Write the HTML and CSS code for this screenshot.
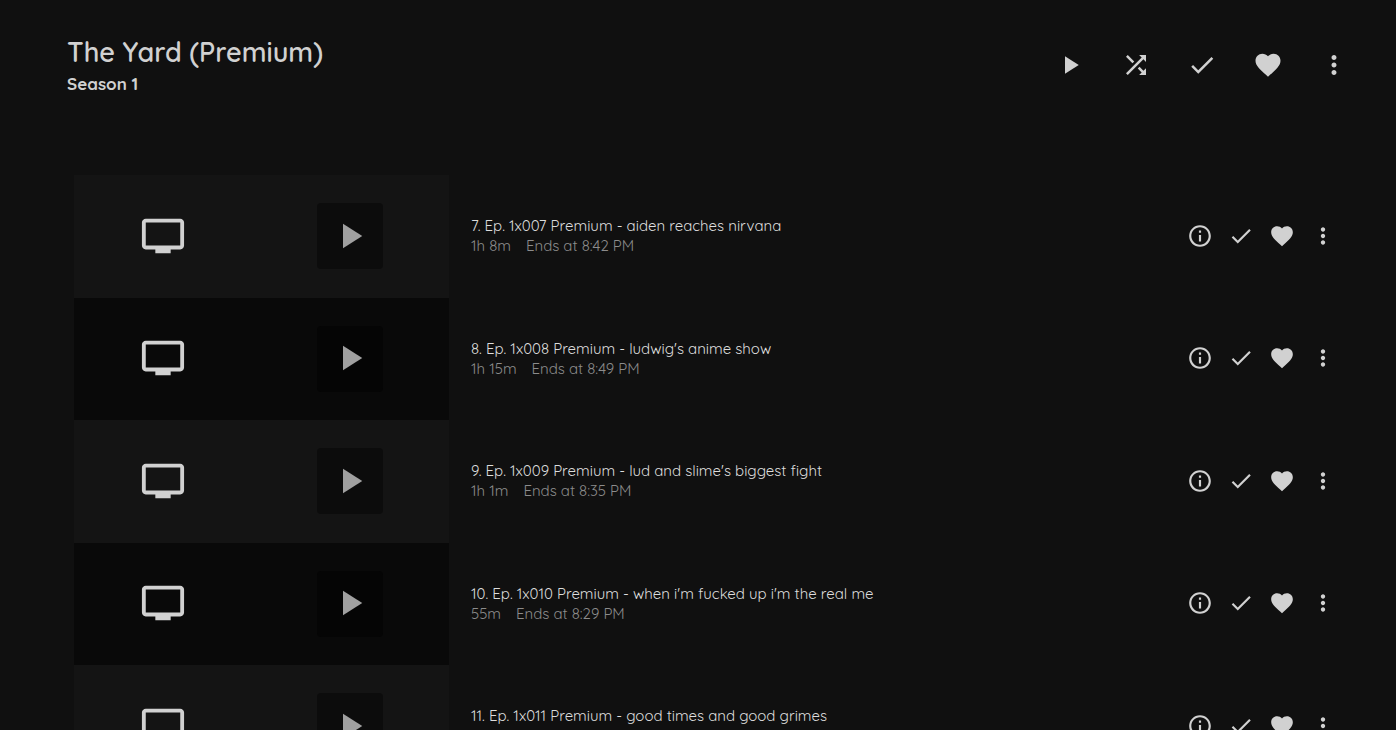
FILE: index.html
```html
<!DOCTYPE html>
<html lang="en">
<head>
<meta charset="utf-8">
<meta name="viewport" content="width=device-width, initial-scale=1">
<title>The Yard (Premium) - Season 1</title>
<link rel="stylesheet" href="styles.css">
</head>
<body>
<svg class="sprite" aria-hidden="true">
  <symbol id="play" viewBox="0 0 24 24"><path d="M8 5v14l11-7z"/></symbol>
  <symbol id="shuffle" viewBox="0 0 24 24"><path d="M10.59 9.17L5.41 4 4 5.41l5.17 5.17 1.42-1.41zM14.5 4l2.04 2.04L4 18.59 5.41 20 17.96 7.46 20 9.5V4h-5.5zm.33 9.41l-1.41 1.41 3.13 3.13L14.5 20H20v-5.5l-2.04 2.04-3.13-3.13z"/></symbol>
  <symbol id="check" viewBox="0 0 24 24"><path d="M9 16.17L4.83 12l-1.42 1.41L9 19 21 7l-1.41-1.41z"/></symbol>
  <symbol id="heart" viewBox="0 0 24 24"><path d="M12 21.35l-1.45-1.32C5.4 15.36 2 12.28 2 8.5 2 5.42 4.42 3 7.5 3c1.74 0 3.41.81 4.5 2.09C13.09 3.81 14.76 3 16.5 3 19.58 3 22 5.42 22 8.5c0 3.78-3.4 6.86-8.55 11.54L12 21.35z"/></symbol>
  <symbol id="more" viewBox="0 0 24 24"><path d="M12 8c1.1 0 2-.9 2-2s-.9-2-2-2-2 .9-2 2 .9 2 2 2zm0 2c-1.1 0-2 .9-2 2s.9 2 2 2 2-.9 2-2-.9-2-2-2zm0 6c-1.1 0-2 .9-2 2s.9 2 2 2 2-.9 2-2-.9-2-2-2z"/></symbol>
  <symbol id="info" viewBox="0 0 24 24"><path d="M11 17h2v-6h-2v6zm1-15C6.48 2 2 6.48 2 12s4.48 10 10 10 10-4.48 10-10S17.52 2 12 2zm0 18c-4.41 0-8-3.59-8-8s3.59-8 8-8 8 3.59 8 8-3.59 8-8 8zM11 9h2V7h-2v2z"/></symbol>
  <symbol id="tv" viewBox="0 0 24 24"><path d="M21 3H3c-1.1 0-2 .9-2 2v12c0 1.1.9 2 2 2h5v2h8v-2h5c1.1 0 1.99-.9 1.99-2L23 5c0-1.1-.9-2-2-2zm0 14H3V5h18v12z"/></symbol>
</svg>

<header class="header">
  <div class="titles">
    <h1 class="title">The Yard (Premium)</h1>
    <h2 class="season">Season 1</h2>
  </div>
  <div class="header-actions">
    <button class="icon-button" type="button" aria-label="Play"><svg class="icon"><use href="#play"/></svg></button>
    <button class="icon-button" type="button" aria-label="Shuffle"><svg class="icon"><use href="#shuffle"/></svg></button>
    <button class="icon-button" type="button" aria-label="Mark played"><svg class="icon"><use href="#check"/></svg></button>
    <button class="icon-button" type="button" aria-label="Favorite"><svg class="icon"><use href="#heart"/></svg></button>
    <button class="icon-button" type="button" aria-label="More"><svg class="icon"><use href="#more"/></svg></button>
  </div>
</header>

<main class="episodes">
  <article class="episode">
    <div class="thumb">
      <svg class="tv"><use href="#tv"/></svg>
      <button class="thumb-play" type="button" aria-label="Play episode 7"><svg class="play-icon"><use href="#play"/></svg></button>
    </div>
    <div class="info">
      <h3 class="name">7. Ep. 1x007 Premium - aiden reaches nirvana</h3>
      <p class="meta"><span>1h 8m</span><span>Ends at 8:42 PM</span></p>
    </div>
    <div class="actions">
      <button class="icon-button small" type="button" aria-label="Info"><svg class="icon"><use href="#info"/></svg></button>
      <button class="icon-button small" type="button" aria-label="Mark played"><svg class="icon"><use href="#check"/></svg></button>
      <button class="icon-button small" type="button" aria-label="Favorite"><svg class="icon"><use href="#heart"/></svg></button>
      <button class="icon-button small" type="button" aria-label="More"><svg class="icon"><use href="#more"/></svg></button>
    </div>
  </article>
  <article class="episode">
    <div class="thumb">
      <svg class="tv"><use href="#tv"/></svg>
      <button class="thumb-play" type="button" aria-label="Play episode 8"><svg class="play-icon"><use href="#play"/></svg></button>
    </div>
    <div class="info">
      <h3 class="name">8. Ep. 1x008 Premium - ludwig's anime show</h3>
      <p class="meta"><span>1h 15m</span><span>Ends at 8:49 PM</span></p>
    </div>
    <div class="actions">
      <button class="icon-button small" type="button" aria-label="Info"><svg class="icon"><use href="#info"/></svg></button>
      <button class="icon-button small" type="button" aria-label="Mark played"><svg class="icon"><use href="#check"/></svg></button>
      <button class="icon-button small" type="button" aria-label="Favorite"><svg class="icon"><use href="#heart"/></svg></button>
      <button class="icon-button small" type="button" aria-label="More"><svg class="icon"><use href="#more"/></svg></button>
    </div>
  </article>
  <article class="episode">
    <div class="thumb">
      <svg class="tv"><use href="#tv"/></svg>
      <button class="thumb-play" type="button" aria-label="Play episode 9"><svg class="play-icon"><use href="#play"/></svg></button>
    </div>
    <div class="info">
      <h3 class="name">9. Ep. 1x009 Premium - lud and slime's biggest fight</h3>
      <p class="meta"><span>1h 1m</span><span>Ends at 8:35 PM</span></p>
    </div>
    <div class="actions">
      <button class="icon-button small" type="button" aria-label="Info"><svg class="icon"><use href="#info"/></svg></button>
      <button class="icon-button small" type="button" aria-label="Mark played"><svg class="icon"><use href="#check"/></svg></button>
      <button class="icon-button small" type="button" aria-label="Favorite"><svg class="icon"><use href="#heart"/></svg></button>
      <button class="icon-button small" type="button" aria-label="More"><svg class="icon"><use href="#more"/></svg></button>
    </div>
  </article>
  <article class="episode">
    <div class="thumb">
      <svg class="tv"><use href="#tv"/></svg>
      <button class="thumb-play" type="button" aria-label="Play episode 10"><svg class="play-icon"><use href="#play"/></svg></button>
    </div>
    <div class="info">
      <h3 class="name">10. Ep. 1x010 Premium - when i'm fucked up i'm the real me</h3>
      <p class="meta"><span>55m</span><span>Ends at 8:29 PM</span></p>
    </div>
    <div class="actions">
      <button class="icon-button small" type="button" aria-label="Info"><svg class="icon"><use href="#info"/></svg></button>
      <button class="icon-button small" type="button" aria-label="Mark played"><svg class="icon"><use href="#check"/></svg></button>
      <button class="icon-button small" type="button" aria-label="Favorite"><svg class="icon"><use href="#heart"/></svg></button>
      <button class="icon-button small" type="button" aria-label="More"><svg class="icon"><use href="#more"/></svg></button>
    </div>
  </article>
  <article class="episode">
    <div class="thumb">
      <svg class="tv"><use href="#tv"/></svg>
      <button class="thumb-play" type="button" aria-label="Play episode 11"><svg class="play-icon"><use href="#play"/></svg></button>
    </div>
    <div class="info">
      <h3 class="name">11. Ep. 1x011 Premium - good times and good grimes</h3>
    </div>
    <div class="actions">
      <button class="icon-button small" type="button" aria-label="Info"><svg class="icon"><use href="#info"/></svg></button>
      <button class="icon-button small" type="button" aria-label="Mark played"><svg class="icon"><use href="#check"/></svg></button>
      <button class="icon-button small" type="button" aria-label="Favorite"><svg class="icon"><use href="#heart"/></svg></button>
      <button class="icon-button small" type="button" aria-label="More"><svg class="icon"><use href="#more"/></svg></button>
    </div>
  </article>
</main>
</body>
</html>
```

FILE: styles.css
```css
* {
  box-sizing: border-box;
}

html {
  scrollbar-width: none;
}

body {
  margin: 0;
  background: #101010;
  color: #d1d1d1;
  font-family: Quicksand, Lato, sans-serif;
  font-size: 15px;
  line-height: 20px;
}

.sprite {
  display: none;
}

.header {
  display: flex;
  justify-content: space-between;
  align-items: center;
  padding: 34px 29px 77px 67px;
}

.title,
.season,
.name,
.meta {
  margin: 0;
}

.title {
  font-size: 27px;
  line-height: 36px;
  font-weight: 600;
}

.season {
  font-size: 17px;
  line-height: 28px;
  font-weight: 700;
}

.header-actions,
.actions {
  display: flex;
}

.icon-button {
  display: flex;
  justify-content: center;
  width: 66px;
  padding: 0;
  border: 0;
  background: none;
  color: inherit;
  cursor: pointer;
}

.icon {
  width: 30px;
  height: 30px;
  fill: currentColor;
}

.header-actions {
  align-self: flex-start;
  padding-top: 16px;
}

.small {
  width: 41px;
}

.small .icon {
  width: 26px;
  height: 26px;
}

.actions,
.tv,
.play-icon {
  margin-bottom: 1px;
}

.episodes {
  padding: 0 53px 0 74px;
}

.episode {
  display: flex;
  align-items: center;
}

.thumb {
  display: flex;
  flex: none;
  justify-content: space-between;
  align-items: center;
  width: 375px;
  aspect-ratio: 150 / 49;
  padding: 0 66px;
  background: #141414;
}

.episode:nth-child(even) .thumb {
  background: #090909;
}

.tv {
  width: 46px;
  height: 46px;
  fill: currentColor;
}

.thumb-play {
  display: flex;
  justify-content: center;
  align-items: center;
  width: 66px;
  height: 66px;
  padding: 0;
  border: 0;
  border-radius: 4px;
  background: #0c0c0c;
  color: #a0a0a0;
  cursor: pointer;
}

.episode:nth-child(even) .thumb-play {
  background: #050505;
}

.play-icon {
  width: 42px;
  height: 42px;
  fill: currentColor;
}

.info {
  flex: 1;
  min-width: 0;
  min-height: 40px;
  padding-left: 22px;
}

.name {
  color: #dddddd;
  font-size: inherit;
  font-weight: 400;
}

.meta {
  display: flex;
  gap: 15px;
  color: #8c8c8c;
}
```
